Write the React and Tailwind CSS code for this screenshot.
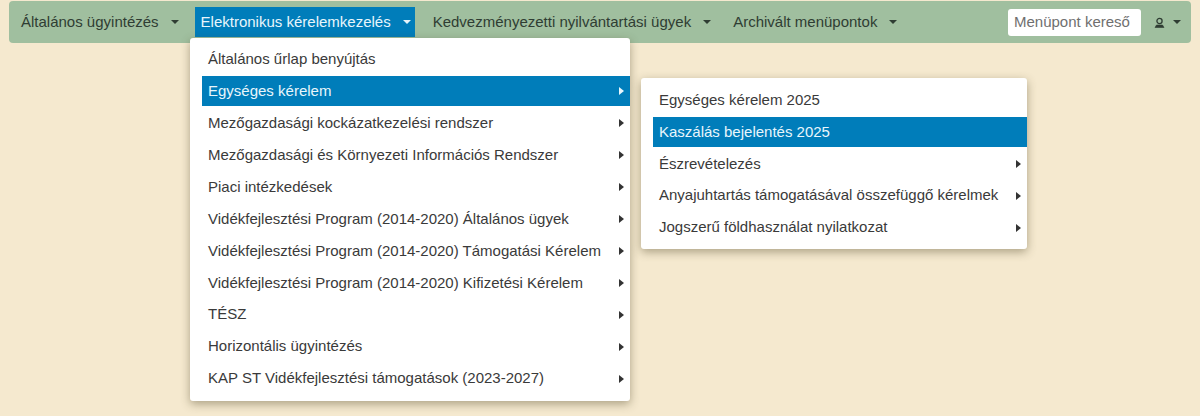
const mainItems = [
  'Általános ügyintézés',
  'Elektronikus kérelemkezelés',
  'Kedvezményezetti nyilvántartási ügyek',
  'Archivált menüpontok',
];

const firstMenu = [
  { label: 'Általános űrlap benyújtás' },
  { label: 'Egységes kérelem', sub: true, active: true },
  { label: 'Mezőgazdasági kockázatkezelési rendszer', sub: true },
  { label: 'Mezőgazdasági és Környezeti Információs Rendszer', sub: true },
  { label: 'Piaci intézkedések', sub: true },
  { label: 'Vidékfejlesztési Program (2014-2020) Általános ügyek', sub: true },
  { label: 'Vidékfejlesztési Program (2014-2020) Támogatási Kérelem', sub: true },
  { label: 'Vidékfejlesztési Program (2014-2020) Kifizetési Kérelem', sub: true },
  { label: 'TÉSZ', sub: true },
  { label: 'Horizontális ügyintézés', sub: true },
  { label: 'KAP ST Vidékfejlesztési támogatások (2023-2027)', sub: true },
];

const secondMenu = [
  { label: 'Egységes kérelem 2025' },
  { label: 'Kaszálás bejelentés 2025', active: true },
  { label: 'Észrevételezés', sub: true },
  { label: 'Anyajuhtartás támogatásával összefüggő kérelmek', sub: true },
  { label: 'Jogszerű földhasználat nyilatkozat', sub: true },
];

function Caret({ light }) {
  return (
    <span className={`inline-block w-0 h-0 border-x-[4px] border-x-transparent border-t-[4px] ${light ? 'border-t-[#e6f4fa]' : 'border-t-[#2f3d33]'}`} />
  );
}

function MenuRow({ item }) {
  return (
    <div className={`flex items-center justify-between h-[30px] pl-[6px] pr-[6px] ${item.active ? 'bg-[#007dba] text-[#e8f6fc]' : 'text-[#3a3a3a]'}`}>
      <span>{item.label}</span>
      {item.sub && (
        <span className={`w-0 h-0 border-y-[4px] border-y-transparent border-l-[5px] ${item.active ? 'border-l-[#e8f6fc]' : 'border-l-[#333]'}`} />
      )}
    </div>
  );
}

function Menu({ items, className }) {
  return (
    <div className={`absolute flex flex-col gap-[1.9px] bg-white rounded-[3px] pl-[12px] shadow-[0_3px_10px_rgba(80,70,40,0.45)] ${className}`}>
      {items.map((item) => <MenuRow key={item.label} item={item} />)}
    </div>
  );
}

export default function App() {
  return (
    <div className="relative h-[416px] overflow-hidden bg-[#f5e9cf] pt-[1px] px-[9px] text-[15px] font-['Liberation_Sans',Arial,sans-serif]">
      <nav className="flex items-center justify-between h-[42px] pl-[6px] pr-[10px] bg-[#a0bf9f] rounded-[4px]">
        <div className="flex items-center gap-[12px] h-full">
          {mainItems.map((label, i) => (
            <div
              key={label}
              className={`flex items-center gap-[12px] h-[30px] pl-[6px] pr-[4px] ${i === 1 ? 'bg-[#007dba] text-[#e8f6fc]' : 'text-[#2f3d33]'}`}
            >
              {label}
              <Caret light={i === 1} />
            </div>
          ))}
        </div>
        <div className="flex items-center gap-[12px]">
          <div className="flex items-center w-[133px] h-[27px] px-[6px] bg-white rounded-[3px] text-[#6f6f6f]">Menüpont kereső</div>
          <div className="flex items-center gap-[7px]">
            <svg width="13" height="13" viewBox="0 0 13 13" fill="none" stroke="#2f3d33">
              <circle cx="6.5" cy="5" r="2.6" strokeWidth="1.3" />
              <path d="M2 11.5l1.5-2.5h6l1.5 2.5z" fill="#2f3d33" strokeWidth="0.6" />
            </svg>
            <Caret />
          </div>
        </div>
      </nav>
      <Menu items={firstMenu} className="left-[190px] top-[38px] w-[440px] pt-[6.6px] pb-[7px]" />
      <Menu items={secondMenu} className="left-[641px] top-[78px] w-[386px] pt-[7px] pb-[6.4px]" />
    </div>
  );
}
